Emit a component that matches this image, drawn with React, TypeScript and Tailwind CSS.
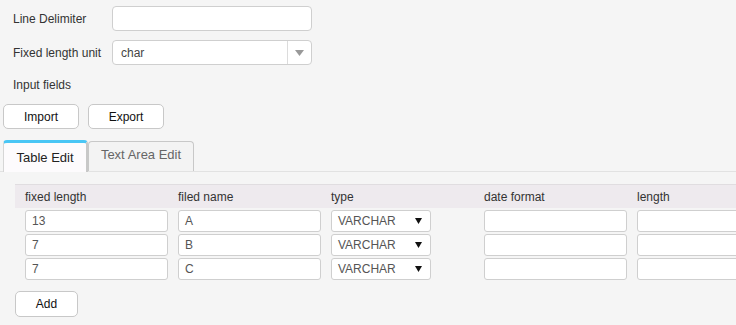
const rows = [
  { len: "13", name: "A" },
  { len: "7", name: "B" },
  { len: "7", name: "C" },
];

const cols = ["fixed length", "filed name", "type", "date format", "length"];

function TextBox({ value = "", className = "" }: { value?: string; className?: string }) {
  return (
    <div
      className={`h-[22px] border border-[#cfcfcf] rounded-[3px] bg-white px-[6px] flex items-center text-[12px] text-[#555] ${className}`}
    >
      {value}
    </div>
  );
}

export default function App() {
  return (
    <div
      className="w-[736px] h-[325px] overflow-hidden bg-[#f5f5f5] text-[#333] text-[12px]"
      style={{ fontFamily: '"Liberation Sans", Arial, sans-serif' }}
    >
      {/* Form */}
      <div className="pt-[6px] pl-[13px]">
        <div className="flex items-center h-[25px]">
          <span className="w-[99px]">Line Delimiter</span>
          <div className="w-[200px] h-[25px] border border-[#cfcfcf] rounded-[4px] bg-white" />
        </div>
        <div className="flex items-center h-[25px] mt-[9px]">
          <span className="w-[99px]">Fixed length unit</span>
          <div className="w-[200px] h-[25px] border border-[#cfcfcf] rounded-[4px] bg-white flex items-center">
            <span className="flex-1 pl-[8px] text-[#444]">char</span>
            <div className="w-[24px] h-full border-l border-[#dcdcdc] flex items-center justify-center">
              <svg width="9" height="6" viewBox="0 0 9 6">
                <path d="M0 0h9L4.5 6z" fill="#999" />
              </svg>
            </div>
          </div>
        </div>
        <div className="mt-[13px] h-[14px] leading-[14px]">Input fields</div>
      </div>

      {/* Buttons */}
      <div className="flex gap-[9px] pl-[3px] mt-[12px]">
        <button className="w-[76px] h-[25px] border border-[#c8c8c8] rounded-[5px] bg-white text-[12px] text-[#111]">
          Import
        </button>
        <button className="w-[76px] h-[25px] border border-[#c8c8c8] rounded-[5px] bg-white text-[12px] text-[#111]">
          Export
        </button>
      </div>

      {/* Tabs */}
      <div className="flex items-end pl-[3px] mt-[11px] border-b border-[#e2e2e2] h-[32px]">
        <div className="w-[85px] h-[32px] -mb-px bg-[#fdfbfd] border-t-[3px] border-t-[#4ac6f5] border-l border-l-[#d6d6d6] border-r-2 border-r-[#c8c8c8] rounded-t-[4px] flex items-center justify-center text-[13px] text-[#222]">
          Table Edit
        </div>
        <div className="w-[106px] h-[30px] bg-[#f3f3f3] border border-b-0 border-[#c8c8c8] rounded-t-[4px] flex items-center justify-center text-[13px] text-[#666] pb-[3px]">
          Text Area Edit
        </div>
      </div>

      {/* Table */}
      <div className="pl-[15px] mt-[12px]">
        <div className="flex h-[24px] items-center bg-[#eeeaee] border-t border-[#e0dde0]">
          {cols.map((c) => (
            <div key={c} className="w-[153px] shrink-0 pl-[10px]">
              {c}
            </div>
          ))}
        </div>
        <div className="flex flex-col gap-[2px] mt-[2px]">
          {rows.map((r, i) => (
            <div key={i} className="flex">
              <div className="w-[153px] shrink-0 pl-[10px]">
                <TextBox value={r.len} className="w-[143px]" />
              </div>
              <div className="w-[153px] shrink-0 pl-[10px]">
                <TextBox value={r.name} className="w-[143px]" />
              </div>
              <div className="w-[153px] shrink-0 pl-[10px]">
                <div className="w-[100px] h-[22px] border border-[#cfcfcf] rounded-[3px] bg-white flex items-center justify-between pl-[6px] pr-[8px] text-[12px] text-[#555]">
                  <span>VARCHAR</span>
                  <svg width="7" height="6" viewBox="0 0 7 6">
                    <path d="M0 0h7L3.5 6z" fill="#111" />
                  </svg>
                </div>
              </div>
              <div className="w-[153px] shrink-0 pl-[10px]">
                <TextBox className="w-[143px]" />
              </div>
              <div className="w-[153px] shrink-0 pl-[10px]">
                <TextBox className="w-[143px]" />
              </div>
            </div>
          ))}
        </div>
        <button className="mt-[11px] w-[63px] h-[26px] border border-[#c8c8c8] rounded-[5px] bg-white text-[12px] text-[#111]">
          Add
        </button>
      </div>
    </div>
  );
}
